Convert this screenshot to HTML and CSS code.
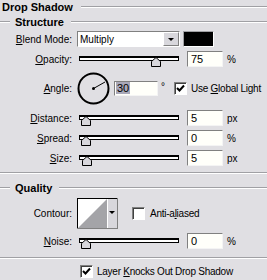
FILE: index.html
```html
<!DOCTYPE html>
<html><head><meta charset="utf-8"/>
<link rel="stylesheet" href="styles.css">
<title>Drop Shadow</title></head>
<body>
<div class="panel">
 <div class="head"><b>Drop Shadow</b><i class="rule"></i></div>
 <div class="group"><i class="stub"></i><b>Structure</b><i class="rule"></i></div>

 <div class="row">
  <span class="lbl"><u>B</u>lend Mode:</span>
  <div class="select"><span class="val">Multiply</span><span class="drop"><i class="arrow"></i></span></div>
  <div class="swatch"></div>
 </div>
 <div class="row">
  <span class="lbl"><u>O</u>pacity:</span>
  <div class="slider"><svg class="thumb" style="left:71px" width="10" height="10"><polygon points="0.5,9.5 0.5,4.5 5,0.5 9.5,4.5 9.5,9.5"/></svg></div>
  <div class="field">75</div><span class="unit">%</span>
 </div>
 <div class="row tall">
  <span class="lbl"><u>A</u>ngle:</span>
  <svg class="dial" width="33" height="33"><circle cx="16.5" cy="16.5" r="15" fill="none" stroke="#000" stroke-width="2"/><line x1="16.5" y1="16.5" x2="28" y2="10" stroke="#000"/><circle cx="16.5" cy="16.5" r="1.5"/></svg>
  <div class="field wide"><span class="sel">30</span></div><span class="deg">°</span>
  <span class="check on"><svg width="11" height="11"><polyline points="2,5 4.5,7.5 9,2.5" fill="none" stroke="#000" stroke-width="2"/></svg></span>
  <span class="ctext">Use <u>G</u>lobal Light</span>
 </div>
 <div class="row">
  <span class="lbl"><u>D</u>istance:</span>
  <div class="slider"><svg class="thumb" style="left:1px" width="10" height="10"><polygon points="0.5,9.5 0.5,4.5 5,0.5 9.5,4.5 9.5,9.5"/></svg></div>
  <div class="field">5</div><span class="unit">px</span>
 </div>
 <div class="row">
  <span class="lbl"><u>S</u>pread:</span>
  <div class="slider"><svg class="thumb" style="left:1px" width="10" height="10"><polygon points="0.5,9.5 0.5,4.5 5,0.5 9.5,4.5 9.5,9.5"/></svg></div>
  <div class="field">0</div><span class="unit">%</span>
 </div>
 <div class="row">
  <span class="lbl"><u>S</u>ize:</span>
  <div class="slider"><svg class="thumb" style="left:2px" width="10" height="10"><polygon points="0.5,9.5 0.5,4.5 5,0.5 9.5,4.5 9.5,9.5"/></svg></div>
  <div class="field">5</div><span class="unit">px</span>
 </div>

 <div class="sep s1"></div>
 <div class="group q"><i class="stub"></i><b>Quality</b><i class="rule"></i></div>

 <div class="row contour">
  <span class="lbl">Contour:</span>
  <svg class="curve" width="41" height="31">
   <rect x="0" y="0" width="41" height="31" fill="#fff"/>
   <polygon points="1,30 30,1 30,30" fill="#a4a4a8"/>
   <rect x="30" y="1" width="10" height="29" fill="#d8d7dc"/>
   <line x1="30.5" y1="1" x2="30.5" y2="30" stroke="#fff"/>
   <polygon points="32,13 38,13 35,16"/>
   <line x1="0" y1="0.5" x2="41" y2="0.5" stroke="#000"/>
   <line x1="0.5" y1="0" x2="0.5" y2="31" stroke="#000"/>
   <line x1="40.5" y1="0" x2="40.5" y2="31" stroke="#808080"/>
   <line x1="0" y1="30.5" x2="41" y2="30.5" stroke="#808080"/>
  </svg>
  <span class="check aa"></span>
  <span class="ctext">Anti-a<u>l</u>iased</span>
 </div>
 <div class="row noise">
  <span class="lbl"><u>N</u>oise:</span>
  <div class="slider"><svg class="thumb" style="left:1px" width="10" height="10"><polygon points="0.5,9.5 0.5,4.5 5,0.5 9.5,4.5 9.5,9.5"/></svg></div>
  <div class="field">0</div><span class="unit">%</span>
 </div>

 <div class="sep s2"></div>
 <div class="row last">
  <span class="check on"><svg width="11" height="11"><polyline points="2,5 4.5,7.5 9,2.5" fill="none" stroke="#000" stroke-width="2"/></svg></span>
  <span class="ctext">Layer <u>K</u>nocks Out Drop Shadow</span>
 </div>
</div>
</body></html>
```

FILE: styles.css
```css
*{ padding:0; margin:0; box-sizing:border-box; }
body{ background:#e0dfe3; font-family:"Liberation Sans", Arial, sans-serif; font-size:10px; color:#000; }
.panel{ width:267px; height:280px; overflow:hidden; }
u{ text-decoration:underline; }
b{ font-size:11px; font-weight:bold; white-space:nowrap; }

.head{ display:flex; align-items:center; height:14px; padding-left:2px; }
.group{ display:flex; align-items:center; height:15px; }
.rule{ flex:1; height:2px; border-top:1px solid #a0a0a4; border-bottom:1px solid #fff; }
.head .rule{ margin-left:8px; }
.stub{ width:10px; height:2px; border-top:1px solid #a0a0a4; border-bottom:1px solid #fff; margin-right:5px; }
.group .rule{ margin-left:7px; }
.group.q{ height:16px; margin-top:6px; }

.row{ display:flex; align-items:center; height:20px; white-space:nowrap; }
.row.tall{ height:39px; }
.lbl{ width:72px; margin-right:5px; text-align:right; flex:none; }

.select{ width:103px; height:16px; background:#fff; border:1px solid; border-color:#808080 #fff #fff #808080; display:flex; align-items:center; }
.select .val{ flex:1; padding-left:2px; }
.drop{ width:16px; height:14px; background:#d8d7dc; border:1px solid; border-color:#fff #808080 #808080 #fff; display:flex; align-items:center; justify-content:center; }
.arrow{ width:0; height:0; border-left:3px solid transparent; border-right:3px solid transparent; border-top:3px solid #000; }
.swatch{ width:31px; height:16px; margin-left:3px; background:#000; border:1px solid; border-color:#a0a0a4 #fff #fff #a0a0a4; }

.slider{ position:relative; width:100px; height:5px; margin-left:2px; margin-top:-1px; background:#fff; border:1px solid #000; border-top-width:2px; }
.thumb{ position:absolute; top:-1px; overflow:visible; }
.thumb polygon{ fill:#d8d7dc; stroke:#000; }

.field{ width:36px; height:16px; margin-left:8px; background:#fffffa; border:1px solid; border-color:#808080 #f4f4f4 #f4f4f4 #808080; padding-left:3px; line-height:14px; font-size:11px; }
.field.wide{ width:44px; height:15px; margin-left:4px; line-height:13px; padding-left:1px; }
.sel{ background:#a9a8b9; padding:0 1px; }
.unit{ margin-left:4px; }
.deg{ width:6px; margin-left:3px; align-self:flex-start; margin-top:12px; }

.check{ width:13px; height:13px; flex:none; background:#fff; border:1px solid; border-color:#808080 #fff #fff #808080; box-shadow:inset 1px 1px #404040; display:flex; align-items:center; justify-content:center; }
.row.tall .check{ margin-left:7px; }
.ctext{ margin-left:4px; letter-spacing:-0.25px; }
.dial{ flex:none; }

.sep{ height:2px; border-top:1px solid #a0a0a4; border-bottom:1px solid #fff; }
.sep.s1{ margin-top:4px; }
.row.contour{ height:32px; margin-top:1px; }
.check.aa{ margin-left:14px; }
.contour .ctext{ margin-left:5px; }
.row.noise{ margin-top:2px; }
.sep.s2{ margin-top:6px; }
.row.last{ margin-top:2px; padding-left:80px; }
```
